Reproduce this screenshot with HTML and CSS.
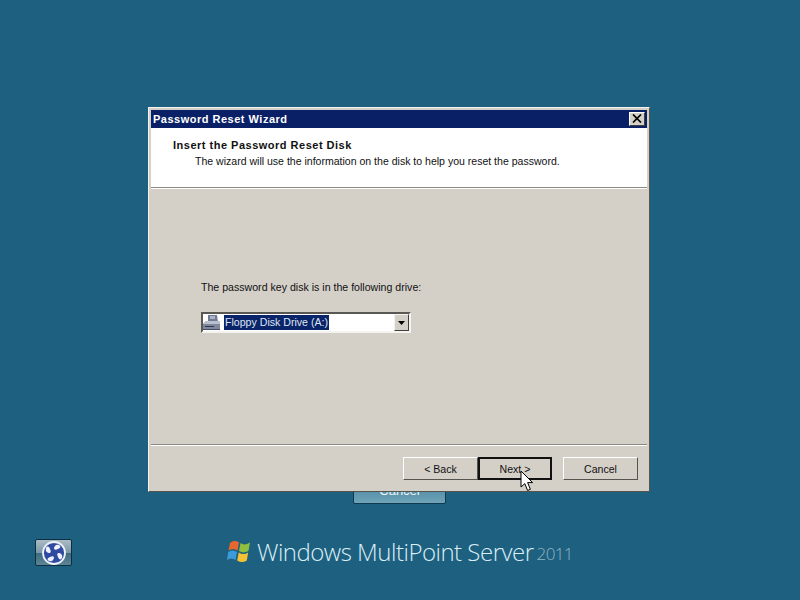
FILE: index.html
```html
<!DOCTYPE html>
<html>
  <head>
    <meta charset="UTF-8" />
    <title>Password Reset Wizard</title>
    <link rel="stylesheet" href="styles.css">
  </head>
  <body>

    <div class="desktop">
      <button class="logon-cancel">Cancel</button>

      <div class="wizard">
        <div class="titlebar">
          <span class="title-text">Password Reset Wizard</span>
          <span class="close-btn">
            <svg width="10" height="9" viewBox="0 0 10 9"><path d="M1 0.5 L9 8.5 M9 0.5 L1 8.5" stroke="#000" stroke-width="1.7" fill="none"/></svg>
          </span>
        </div>

        <div class="header">
          <h1>Insert the Password Reset Disk</h1>
          <p>The wizard will use the information on the disk to help you reset the password.</p>
        </div>

        <div class="content">
          <label>The password key disk is in the following drive:</label>
          <div class="combo">
            <svg class="drive-icon" width="18" height="17" viewBox="0 0 18 17">
              <path d="M5 1 L14 1 L15 8 L5 8 Z" fill="#6f7c94"/>
              <path d="M7 2 H12 V5 H7 Z" fill="#aab4c6"/>
              <path d="M3 7 H17 V15 H0 V10 Z" fill="#7e889c"/>
              <path d="M3 7 H17 V10 H0 Z" fill="#b9c1cf"/>
              <path d="M2 12 H11 V13 H2 Z" fill="#2e3550"/>
              <path d="M0 15 H17 V16 H0 Z" fill="#454d63"/>
            </svg>
            <span class="combo-value">Floppy Disk Drive (A:)</span>
            <span class="combo-arrow">
              <svg width="7" height="4" viewBox="0 0 7 4"><path d="M0 0 H7 L3.5 4 Z" fill="#000"/></svg>
            </span>
          </div>
        </div>

        <div class="footer">
          <button class="btn btn-back">&lt; Back</button>
          <button class="btn btn-default">Next &gt;</button>
          <button class="btn btn-cancel">Cancel</button>
        </div>
      </div>

      <svg class="cursor" width="14" height="22" viewBox="0 0 14 22">
        <path d="M1 1 V17 L4.800 13.600 L7.600 20.500 L10.400 19.300 L7.600 12.600 L12.600 12.600 Z" fill="#fff" stroke="#000" stroke-width="1"/>
      </svg>

      <button class="access-btn">
        <svg width="24" height="24" viewBox="0 0 24 24">
          <circle cx="12" cy="12" r="11" fill="#2f4aa0" stroke="#eef2fa" stroke-width="1.8"/>
          <path d="M12 8 C12 5 14 3 17 4 C19 5 19 7 16 8 C14 9 13 9 12 8 Z" fill="#eef2fa"/>
          <path d="M16 12 C19 12 21 14 20 17 C19 19 17 19 16 16 C15 14 15 13 16 12 Z" fill="#eef2fa"/>
          <path d="M12 16 C12 19 10 21 7 20 C5 19 5 17 8 16 C10 15 11 15 12 16 Z" fill="#eef2fa"/>
          <path d="M8 12 C5 12 3 10 4 7 C5 5 7 5 8 8 C9 10 9 11 8 12 Z" fill="#eef2fa"/>
        </svg>
      </button>

      <div class="brand">
        <svg class="flag" width="23" height="23" viewBox="0 0 23 23">
          <path d="M3 3 C6 0.500 9 0.500 12 2.500 L10.500 10.500 C7.500 8.500 4.500 8.500 1.500 10.500 Z" fill="#e8672c"/>
          <path d="M13.500 3 C16 5 19 5 23 2.500 L21.500 10.800 C18 13 15 13 12 11 Z" fill="#8fbf3c"/>
          <path d="M1.200 12 C4 10 7 10 10 12 L8.500 20 C5.500 18 3 18 0 20 Z" fill="#3d9bd9"/>
          <path d="M11.700 12.500 C15 14.500 18 14.500 21.200 12.500 L19.800 20.500 C16.500 22.500 13.500 22.500 10.200 20.500 Z" fill="#f4c232"/>
        </svg>
        <span class="brand-name">Windows MultiPoint Server</span>
        <span class="brand-year">2011</span>
      </div>
    </div>

  </body>
</html>
```

FILE: styles.css
```css
body {
  margin: 0;
  font-family: "Liberation Sans", Arial, sans-serif;
  font-size: 10.6px;
  color: #111;
}

.desktop {
  position: relative;
  width: 800px;
  height: 600px;
  overflow: hidden;
  background: #1d607f;
}

/* logon screen button, mostly hidden behind the wizard */
.logon-cancel {
  position: absolute;
  left: 353px;
  top: 470px;
  width: 93px;
  height: 34px;
  padding: 6px 0 0;
  border: 1px solid #0f3a52;
  border-radius: 2px;
  background: linear-gradient(#2f7391, #6fa3b8);
  color: #eef6f9;
  font-family: inherit;
  font-size: 13px;
}

.wizard {
  position: absolute;
  left: 148px;
  top: 107px;
  width: 502px;
  height: 385px;
  box-sizing: border-box;
  padding: 2px;
  display: flex;
  flex-direction: column;
  background: #d4d0c8;
  border: 1px solid #f4f3ef;
  border-right-color: #55544f;
  border-bottom-color: #55544f;
}

.titlebar {
  height: 18px;
  flex: none;
  display: flex;
  align-items: center;
  justify-content: space-between;
  padding: 0 2px 1px;
  box-sizing: border-box;
  background: #0a2066;
  color: #fff;
}

.title-text {
  font-weight: bold;
  font-size: 11px;
  letter-spacing: 0.5px;
}

.close-btn {
  width: 14px;
  height: 12px;
  display: flex;
  align-items: center;
  justify-content: center;
  background: #d4d0c8;
  border: 1px solid;
  border-color: #fff #404040 #404040 #fff;
}

.header {
  height: 60px;
  flex: none;
  box-sizing: border-box;
  padding: 11px 0 0 22px;
  background: #fff;
  border-bottom: 1px solid #8c8a84;
}

.header h1 {
  margin: 0;
  font-size: 11px;
  font-weight: bold;
  line-height: 13px;
  letter-spacing: 0.5px;
}

.header p {
  margin: 3px 0 0 22px;
  line-height: 13px;
  font-size: 10.54px;
}

.content {
  flex: 1;
  padding: 91px 0 0 50px;
  border-top: 1px solid #fff;
}

.content label {
  display: block;
  line-height: 14px;
}

.combo {
  margin-top: 18px;
  width: 210px;
  height: 21px;
  box-sizing: border-box;
  display: flex;
  align-items: center;
  padding: 0 2px 0 0;
  background: #fff;
  border: 2px solid;
  border-color: #5a5852 #f4f3ef #f4f3ef #5a5852;
}

.drive-icon {
  flex: none;
  margin-right: 3px;
}

.combo-value {
  padding: 0 1px;
  height: 15px;
  line-height: 15px;
  background: #0a246a;
  color: #dfe6f4;
}

.combo-arrow {
  margin-left: auto;
  margin-right: -2px;
  width: 15px;
  height: 17px;
  box-sizing: border-box;
  display: flex;
  align-items: center;
  justify-content: center;
  background: #d4d0c8;
  border: 1px solid;
  border-color: #f4f3ef #404040 #404040 #f4f3ef;
}

.footer {
  height: 45px;
  flex: none;
  box-sizing: border-box;
  display: flex;
  align-items: flex-start;
  padding: 13px 9px 0 0;
  justify-content: flex-end;
  box-shadow: inset 0 1px 0 #8c8a84, inset 0 2px 0 #fff;
}

.btn {
  width: 75px;
  height: 23px;
  padding: 0;
  background: #d4d0c8;
  border: 1px solid;
  border-color: #fff #55544f #55544f #fff;
  font-family: inherit;
  font-size: 10.6px;
  color: #111;
}

.btn-default {
  width: 74px;
  border: 2px solid #111;
}

.btn-cancel {
  margin-left: 11px;
}

.cursor {
  position: absolute;
  left: 520px;
  top: 470px;
}

.access-btn {
  position: absolute;
  left: 35px;
  top: 539px;
  width: 37px;
  height: 27px;
  padding: 0;
  display: flex;
  align-items: center;
  justify-content: center;
  border: 1px solid #0e2f42;
  border-radius: 2px;
  background: linear-gradient(#a9bcc6 0, #7d98a6 50%, #3f6a7e 52%, #5d8596 100%);
}

.brand {
  position: absolute;
  left: 227px;
  top: 535px;
  display: flex;
  align-items: center;
  height: 32px;
  white-space: nowrap;
}

.flag {
  flex: none;
  margin-right: 7px;
}

.brand-name {
  font-family: "Open Sans", sans-serif;
  font-weight: 300;
  font-size: 24px;
  color: #dceef5;
  letter-spacing: -0.5px;
}

.brand-year {
  margin: 4px 0 0 3px;
  font-family: "Open Sans", sans-serif;
  font-weight: 300;
  font-size: 17px;
  color: #93b4c3;
  letter-spacing: -0.6px;
}
```
